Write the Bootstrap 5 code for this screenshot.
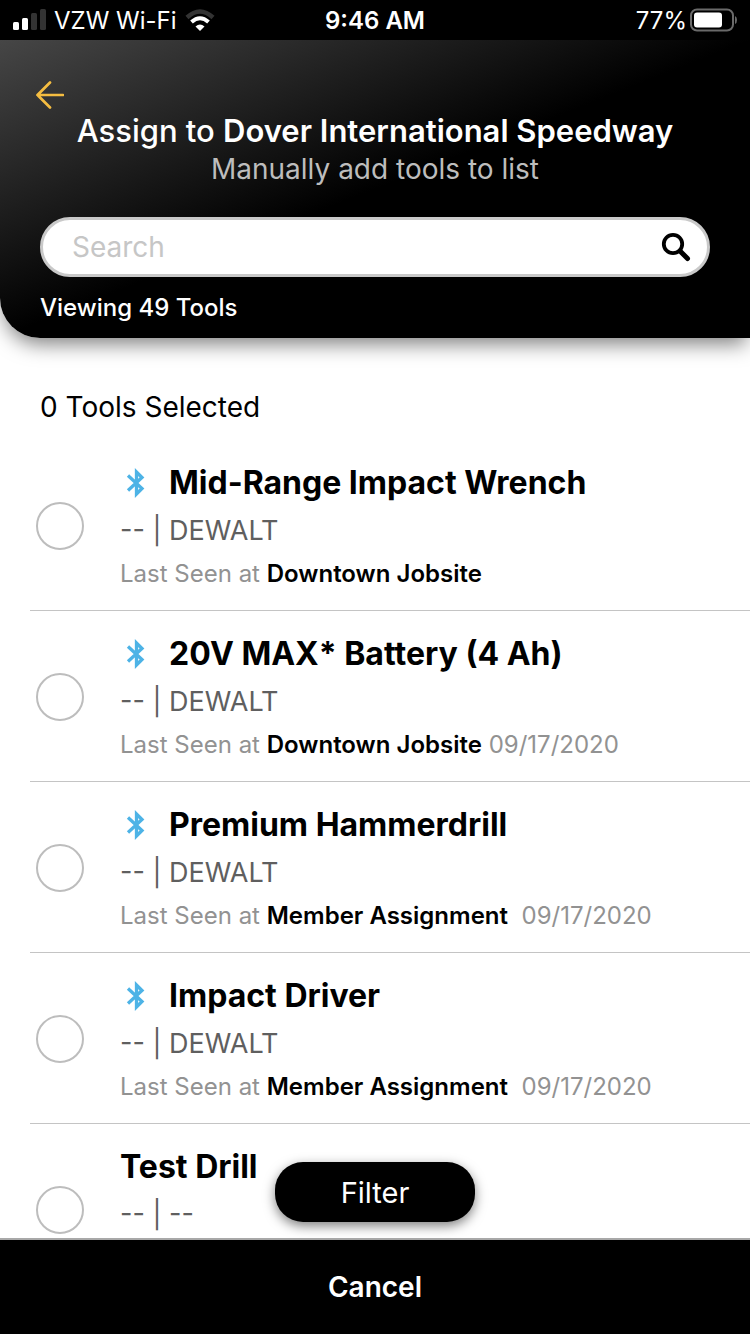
<!DOCTYPE html>
<html lang="en">
<head>
<meta charset="utf-8">
<meta name="viewport" content="width=device-width, initial-scale=1">
<title>Assign tools</title>
<link href="https://cdn.jsdelivr.net/npm/bootstrap@5.3.0/dist/css/bootstrap.min.css" rel="stylesheet">
<style>
  body { font-family: Inter, "Liberation Sans", sans-serif; color: #000; background: #fff; }
  .status-bar { height: 40px; font-size: 24px; line-height: 38px; padding: 2px 13px 0; }
  .status-side { flex: 1 1 0; }
  .status-side svg { margin-bottom: 2px; }
  .battery-level { margin-right: 3px; }
  .app-header {
    z-index: 2;
    padding: 41px 40px 12px;
    border-bottom-left-radius: 40px;
    background: linear-gradient(to bottom right, #464646, #000 50%);
    box-shadow: 0 10px 20px -4px rgba(0, 0, 0, .5);
  }
  .back-btn { margin: 0 0 2px -4px; line-height: 0; }
  .page-title { font-size: 31px; line-height: 40px; font-weight: 500; }
  .page-title strong { font-weight: 600; }
  .page-sub { font-size: 28px; line-height: 36px; color: #bdbdbd; }
  .search-box { height: 60px; margin-top: 30px; padding: 0 16px 0 29px; border: 3px solid #c9c9c9; }
  .search-box input { font-size: 28px; color: #000; min-width: 0; }
  .search-box input::placeholder { color: #c6c6c6; opacity: 1; }
  .view-count { font-size: 24px; line-height: 36px; margin-top: 13px; font-weight: 500; }
  .tool-scroll { min-height: 0; scrollbar-width: none; }
  .tool-scroll::-webkit-scrollbar { display: none; }
  .selected-count { font-size: 28px; line-height: 40px; padding: 49px 40px 13px; }
  .tool-list { margin-left: 30px; }
  .tool-row { padding: 20px 24px 18px 6px; gap: 36px; border-bottom: 1px solid #c4c4c4; }
  .tool-check { width: 48px; height: 48px; margin: 0; border: 2px solid #bdbdbd; }
  .tool-name { font-size: 32px; line-height: 46px; font-weight: 700; }
  .tool-name svg { margin: 0 23px 0 6px; }
  .tool-brand { font-size: 27px; line-height: 50px; color: #5f5f5f; }
  .tool-seen { font-size: 24px; line-height: 36px; color: #929292; }
  .tool-seen strong { font-weight: 600; color: #000; }
  .filter-btn {
    bottom: 16px; width: 200px; height: 60px; border: 0; border-radius: 28px; padding: 2px 0 0;
    font-size: 29px; box-shadow: 0 4px 12px rgba(0, 0, 0, .5);
  }
  .bottom-bar { border-top: 2px solid #a8a8a8; }
  .cancel-btn { height: 94px; font-size: 28px; font-weight: 600; }
</style>
</head>
<body>
<svg class="d-none">
  <symbol id="bt" viewBox="0 0 20 30">
    <path d="M2 7.500 16 20.500 10.500 26V4L16 9.500 2 22.500" fill="none" stroke="#4db3e6" stroke-width="3.300"/>
  </symbol>
</svg>
<div class="d-flex flex-column vh-100">
  <div class="status-bar d-flex align-items-center bg-black text-white flex-shrink-0">
    <div class="status-side d-flex align-items-center">
      <svg width="33" height="22" viewBox="0 0 33 22" fill="#fff" aria-hidden="true">
        <rect x="0" y="13" width="6" height="8" rx="1.500"/><rect x="9" y="9" width="6" height="12" rx="1.500"/>
        <rect x="18" y="4" width="6" height="17" rx="1.500" fill="#333"/><rect x="27" y="0" width="6" height="21" rx="1.500" fill="#333"/>
      </svg>
      <span class="ms-2 me-2">VZW Wi-Fi</span>
      <svg width="30" height="23" viewBox="0 0 30 23" fill="none" aria-hidden="true">
        <path d="M2 8.500Q15-3.500 28 8.500" stroke="#333" stroke-width="4.500"/>
        <path d="M6.500 13Q15 5.500 23.500 13" stroke="#fff" stroke-width="4"/>
        <path d="M10.500 17.500Q15 13.500 19.500 17.500L15 22Z" fill="#fff"/>
      </svg>
    </div>
    <div class="fw-semibold">9:46 AM</div>
    <div class="status-side d-flex align-items-center justify-content-end">
      <span class="battery-level">77%</span>
      <svg width="47" height="24" viewBox="0 0 47 24" aria-hidden="true">
        <rect x="1" y="1.500" width="42" height="21" rx="6" fill="none" stroke="#6a6a6a" stroke-width="2"/>
        <rect x="4" y="4.500" width="28" height="15" rx="3" fill="#fff"/>
        <path d="M45 8q2 1 2 4t-2 4z" fill="#6a6a6a"/>
      </svg>
    </div>
  </div>

  <header class="app-header position-relative text-white flex-shrink-0">
    <button type="button" class="back-btn btn p-0 border-0 d-block" aria-label="Back">
      <svg width="28" height="28" viewBox="0 0 28 28" fill="none" stroke="#f5bd41" stroke-width="2.700" stroke-linecap="round" stroke-linejoin="round">
        <path d="M14 1.500 1.500 14 14 26.500M1.500 14H27"/>
      </svg>
    </button>
    <h1 class="page-title text-center text-nowrap m-0">Assign to <strong>Dover International Speedway</strong></h1>
    <p class="page-sub text-center m-0">Manually add tools to list</p>
    <form class="search-box d-flex align-items-center bg-white rounded-pill">
      <input type="text" class="flex-grow-1 border-0 bg-transparent p-0" placeholder="Search" aria-label="Search">
      <button type="submit" class="btn p-0 border-0 lh-1" aria-label="Search tools">
        <svg class="d-block" width="30" height="30" viewBox="0 0 30 30" fill="none" stroke="#000">
          <circle cx="12" cy="12" r="9.200" stroke-width="3.800"/>
          <path d="M19 19 26.500 26.500" stroke-width="5" stroke-linecap="round"/>
        </svg>
      </button>
    </form>
    <p class="view-count mb-0">Viewing 49 Tools</p>
  </header>

  <div class="position-relative flex-grow-1 d-flex flex-column tool-scroll">
    <main class="tool-scroll flex-grow-1 overflow-auto">
      <div class="selected-count">0 Tools Selected</div>
      <ul class="tool-list list-unstyled mb-0">
        <li class="tool-row d-flex align-items-center">
          <input class="tool-check form-check-input rounded-circle flex-shrink-0" type="checkbox" id="t1">
          <label for="t1">
            <span class="tool-name d-flex align-items-center"><svg width="20" height="30"><use href="#bt"/></svg>Mid-Range Impact Wrench</span>
            <span class="tool-brand d-block">-- | DEWALT</span>
            <span class="tool-seen d-block">Last Seen at <strong>Downtown Jobsite</strong></span>
          </label>
        </li>
        <li class="tool-row d-flex align-items-center">
          <input class="tool-check form-check-input rounded-circle flex-shrink-0" type="checkbox" id="t2">
          <label for="t2">
            <span class="tool-name d-flex align-items-center"><svg width="20" height="30"><use href="#bt"/></svg>20V MAX* Battery (4 Ah)</span>
            <span class="tool-brand d-block">-- | DEWALT</span>
            <span class="tool-seen d-block">Last Seen at <strong>Downtown Jobsite</strong> 09/17/2020</span>
          </label>
        </li>
        <li class="tool-row d-flex align-items-center">
          <input class="tool-check form-check-input rounded-circle flex-shrink-0" type="checkbox" id="t3">
          <label for="t3">
            <span class="tool-name d-flex align-items-center"><svg width="20" height="30"><use href="#bt"/></svg>Premium Hammerdrill</span>
            <span class="tool-brand d-block">-- | DEWALT</span>
            <span class="tool-seen d-block">Last Seen at <strong>Member Assignment</strong>&nbsp; 09/17/2020</span>
          </label>
        </li>
        <li class="tool-row d-flex align-items-center">
          <input class="tool-check form-check-input rounded-circle flex-shrink-0" type="checkbox" id="t4">
          <label for="t4">
            <span class="tool-name d-flex align-items-center"><svg width="20" height="30"><use href="#bt"/></svg>Impact Driver</span>
            <span class="tool-brand d-block">-- | DEWALT</span>
            <span class="tool-seen d-block">Last Seen at <strong>Member Assignment</strong>&nbsp; 09/17/2020</span>
          </label>
        </li>
        <li class="tool-row d-flex align-items-center">
          <input class="tool-check form-check-input rounded-circle flex-shrink-0" type="checkbox" id="t5">
          <label for="t5">
            <span class="tool-name d-block">Test Drill</span>
            <span class="tool-brand d-block">-- | --</span>
            <span class="tool-seen d-block">&nbsp;</span>
          </label>
        </li>
      </ul>
    </main>
    <button type="button" class="filter-btn position-absolute start-50 translate-middle-x bg-black text-white">Filter</button>
  </div>

  <footer class="bottom-bar bg-black flex-shrink-0">
    <button type="button" class="cancel-btn btn w-100 p-0 border-0 rounded-0 text-white">Cancel</button>
  </footer>
</div>
<script src="https://cdn.jsdelivr.net/npm/bootstrap@5.3.0/dist/js/bootstrap.bundle.min.js"></script>
</body>
</html>
